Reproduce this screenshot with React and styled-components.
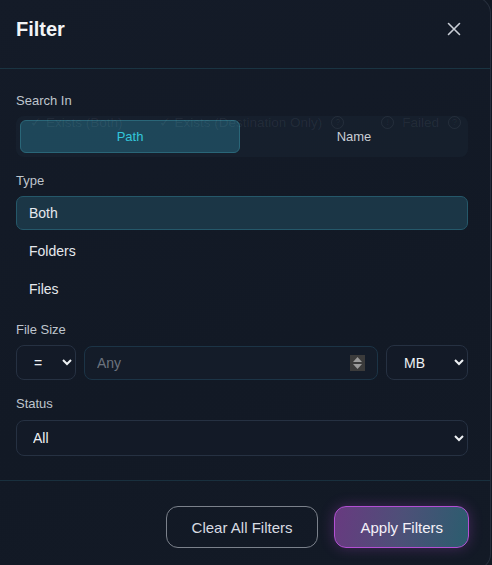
import React, { useState } from 'react';
import styled, { createGlobalStyle } from 'styled-components';

const GlobalStyle = createGlobalStyle`
  html, body {
    margin: 0;
    padding: 0;
    background: #111823;
    overflow: hidden;
    font-family: "Liberation Sans", Arial, sans-serif;
  }
`;

const Modal = styled.div`
  box-sizing: border-box;
  width: 503px;
  height: 573px;
  margin: -3px 0 0 -12px;
  padding-left: 11px;
  border: 1px solid rgba(160, 180, 200, 0.14);
  border-radius: 16px;
  background: linear-gradient(160deg, #141b28 0%, #121925 60%, #131a26 100%);
  display: flex;
  flex-direction: column;
  color: #e8ecf0;
`;

const Header = styled.div`
  display: flex;
  align-items: flex-start;
  justify-content: space-between;
  height: 71px;
  padding: 21px 26px 0 16px;
  box-sizing: border-box;
  border-bottom: 1px solid #1a3442;
`;

const Title = styled.h2`
  margin: 0;
  font-size: 20px;
  line-height: 20px;
  font-weight: 700;
  color: #f2f4f7;
`;

const CloseButton = styled.button`
  background: none;
  border: none;
  padding: 0;
  width: 20px;
  height: 20px;
  display: flex;
  align-items: center;
  justify-content: center;
  color: #c9ced6;
  cursor: pointer;
`;

const Body = styled.div`
  flex: 1;
  display: flex;
  flex-direction: column;
  padding: 24px 22px 0 16px;
`;

const Section = styled.div`
  display: flex;
  flex-direction: column;
  margin-bottom: ${(p) => p.$gap}px;
`;

const Label = styled.div`
  font-size: 13px;
  color: #bfc5cd;
  line-height: 16px;
  margin-bottom: ${(p) => p.$mb || 8}px;
`;

const Segmented = styled.div`
  position: relative;
  display: grid;
  grid-template-columns: 1fr 1fr;
  gap: 4px;
  padding: 4px;
  border-radius: 8px;
  background: rgba(30, 42, 58, 0.35);
`;

const Ghost = styled.div`
  position: absolute;
  z-index: 1;
  left: 14px;
  top: -2px;
  display: flex;
  align-items: center;
  font-size: 13.5px;
  line-height: 17px;
  color: rgba(200, 215, 230, 0.08);
  white-space: nowrap;
  pointer-events: none;
`;

const GhostItem = styled.span`
  display: inline-flex;
  align-items: center;
  margin-right: ${(p) => p.$mr}px;
`;

const GhostCheck = styled.span`
  width: 8px;
  margin-right: 8px;
`;

const GhostCircle = styled.span`
  box-sizing: border-box;
  display: inline-flex;
  align-items: center;
  justify-content: center;
  width: 13px;
  height: 13px;
  border: 1.5px solid currentColor;
  border-radius: 50%;
  font-size: 9px;
  margin: 0 ${(p) => p.$mr || 0}px 0 ${(p) => p.$ml || 0}px;
`;

const SegButton = styled.button`
  height: 33px;
  border-radius: 6px;
  font-family: inherit;
  font-size: 13px;
  cursor: pointer;
  border: 1px solid ${(p) => (p.$active ? '#2a6678' : 'transparent')};
  background: ${(p) => (p.$active ? 'rgba(34, 84, 104, 0.75)' : 'transparent')};
  color: ${(p) => (p.$active ? '#33c6dc' : '#c8cdd4')};
`;

const OptionList = styled.div`
  display: flex;
  flex-direction: column;
  gap: 4px;
`;

const Option = styled.div`
  box-sizing: border-box;
  height: 34px;
  display: flex;
  align-items: center;
  padding: 0 12px;
  border-radius: 7px;
  font-size: 14px;
  cursor: pointer;
  color: #e6e9ee;
  border: 1px solid ${(p) => (p.$active ? '#25586a' : 'transparent')};
  background: ${(p) => (p.$active ? '#1b3646' : 'transparent')};
`;

const Row = styled.div`
  display: flex;
  align-items: flex-start;
  gap: 8px;
`;

const Select = styled.select`
  color-scheme: dark;
  box-sizing: border-box;
  height: ${(p) => p.$h}px;
  width: ${(p) => (p.$w ? `${p.$w}px` : '100%')};
  flex: none;
  padding: 0 ${(p) => p.$px}px;
  border-radius: 8px;
  border: 1px solid #263142;
  background: #131a27;
  color: #eef1f4;
  font-family: inherit;
  font-size: 14px;
  outline: none;
`;

const InputBox = styled.div`
  box-sizing: border-box;
  flex: 1;
  min-width: 0;
  height: 34px;
  margin-top: 1px;
  display: flex;
  align-items: center;
  padding: 0 12px;
  border-radius: 8px;
  border: 1px solid #1c3446;
  background: #141c29;
`;

const NumberInput = styled.input`
  flex: 1;
  min-width: 0;
  border: none;
  padding: 0;
  background: transparent;
  color: #eef1f4;
  font-family: inherit;
  font-size: 14px;
  outline: none;
  -moz-appearance: textfield;
  &::placeholder {
    color: #6c737e;
  }
  &::-webkit-inner-spin-button,
  &::-webkit-outer-spin-button {
    -webkit-appearance: none;
    margin: 0;
  }
`;

const Spinner = styled.div`
  width: 15px;
  height: 16px;
  background: #3b3b3b;
  display: flex;
  flex-direction: column;
  align-items: center;
  justify-content: center;
  gap: 2px;
`;

const Footer = styled.div`
  display: flex;
  justify-content: flex-end;
  gap: 16px;
  padding: 25px 21px 0 0;
  height: 89px;
  box-sizing: border-box;
  border-top: 1px solid #19303e;
`;

const Button = styled.button`
  box-sizing: border-box;
  height: 42px;
  padding: 0 25px;
  border-radius: 12px;
  font-family: inherit;
  font-size: 15px;
  cursor: pointer;
  color: ${(p) => (p.$primary ? '#f4f0f8' : '#d8dce2')};
  border: 1px solid ${(p) => (p.$primary ? '#b34fd4' : '#7b818b')};
  background: ${(p) =>
    p.$primary ? 'linear-gradient(100deg, #683a80 0%, #4d5078 50%, #2b5d6e 100%)' : 'transparent'};
  box-shadow: ${(p) => (p.$primary ? '0 0 14px rgba(170, 70, 200, 0.32)' : 'none')};
`;

const CloseIcon = () => (
  <svg width="14" height="14" viewBox="0 0 14 14" fill="none">
    <path d="M1.5 1.5 L12.5 12.5 M12.5 1.5 L1.5 12.5" stroke="currentColor" strokeWidth="1.6" strokeLinecap="round" />
  </svg>
);

const SpinArrows = () => (
  <Spinner>
    <svg width="9" height="5" viewBox="0 0 9 5">
      <path d="M4.5 0 L9 5 L0 5 Z" fill="#9b9b9b" />
    </svg>
    <svg width="9" height="5" viewBox="0 0 9 5">
      <path d="M0 0 L9 0 L4.5 5 Z" fill="#9b9b9b" />
    </svg>
  </Spinner>
);

export default function App() {
  const [searchIn, setSearchIn] = useState('path');
  const [type, setType] = useState('both');

  const types = [
    { id: 'both', label: 'Both' },
    { id: 'folders', label: 'Folders' },
    { id: 'files', label: 'Files' },
  ];

  return (
    <>
      <GlobalStyle />
      <Modal>
        <Header>
          <Title>Filter</Title>
          <CloseButton aria-label="Close">
            <CloseIcon />
          </CloseButton>
        </Header>
        <Body>
          <Section $gap={16}>
            <Label $mb={7}>Search In</Label>
            <Segmented>
              <Ghost>
                <GhostItem $mr={36}>
                  <GhostCheck>✓</GhostCheck>Exists (Both)
                </GhostItem>
                <GhostItem $mr={0}>
                  <GhostCheck>✓</GhostCheck>Exists (Destination Only)
                  <GhostCircle $ml={9}>?</GhostCircle>
                </GhostItem>
                <GhostItem $mr={0}>
                  <GhostCircle $ml={37} $mr={8}>!</GhostCircle>Failed
                  <GhostCircle $ml={9}>?</GhostCircle>
                </GhostItem>
              </Ghost>
              <SegButton $active={searchIn === 'path'} onClick={() => setSearchIn('path')}>
                Path
              </SegButton>
              <SegButton $active={searchIn === 'name'} onClick={() => setSearchIn('name')}>
                Name
              </SegButton>
            </Segmented>
          </Section>
          <Section $gap={16}>
            <Label $mb={7}>Type</Label>
            <OptionList>
              {types.map((t) => (
                <Option key={t.id} $active={type === t.id} onClick={() => setType(t.id)}>
                  {t.label}
                </Option>
              ))}
            </OptionList>
          </Section>
          <Section $gap={16}>
            <Label $mb={7}>File Size</Label>
            <Row>
              <Select $w={60} $h={35} $px={13} defaultValue="=">
                <option value="=">=</option>
                <option value=">">&gt;</option>
                <option value="<">&lt;</option>
              </Select>
              <InputBox>
                <NumberInput type="number" placeholder="Any" />
                <SpinArrows />
              </InputBox>
              <Select $w={82} $h={35} $px={13} defaultValue="MB">
                <option>KB</option>
                <option>MB</option>
                <option>GB</option>
              </Select>
            </Row>
          </Section>
          <Section $gap={0}>
            <Label>Status</Label>
            <Select $h={36} $px={12} defaultValue="all">
              <option value="all">All</option>
              <option value="exists">Exists</option>
              <option value="failed">Failed</option>
            </Select>
          </Section>
        </Body>
        <Footer>
          <Button>Clear All Filters</Button>
          <Button $primary>Apply Filters</Button>
        </Footer>
      </Modal>
    </>
  );
}
